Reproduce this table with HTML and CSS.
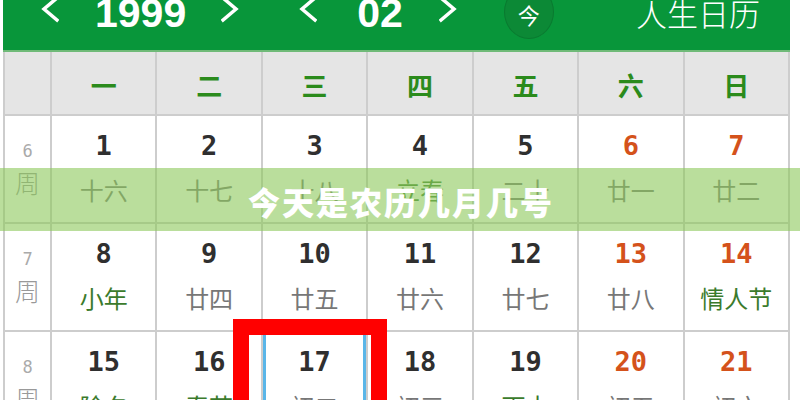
FILE: index.html
```html
<!DOCTYPE html>
<html lang="zh">
<head>
<meta charset="utf-8">
<title>人生日历</title>
<link rel="stylesheet" href="styles.css">
</head>
<body>
<div class="cal">
  <header class="topbar">
    <span class="chev c1"><svg width="18" height="26" viewBox="0 0 18 26"><polyline points="16,1 3,12 16,23" /></svg></span>
    <span class="year">1999</span>
    <span class="chev c2"><svg width="18" height="26" viewBox="0 0 18 26"><polyline points="2,1 15,12 2,23" /></svg></span>
    <span class="chev c3"><svg width="18" height="26" viewBox="0 0 18 26"><polyline points="16,1 3,12 16,23" /></svg></span>
    <span class="month">02</span>
    <span class="chev c4"><svg width="18" height="26" viewBox="0 0 18 26"><polyline points="2,1 15,12 2,23" /></svg></span>
    <span class="today-btn">今</span>
    <span class="brand">人生日历</span>
  </header>
  <div class="grid">
    <div class="hd"></div>
    <div class="hd">一</div>
    <div class="hd">二</div>
    <div class="hd">三</div>
    <div class="hd">四</div>
    <div class="hd">五</div>
    <div class="hd">六</div>
    <div class="hd">日</div>

    <div class="wk"><span class="wn">6</span><span class="wz">周</span></div>
    <div class="day"><span class="num">1</span><span class="lunar">十六</span></div>
    <div class="day"><span class="num">2</span><span class="lunar">十七</span></div>
    <div class="day"><span class="num">3</span><span class="lunar">十八</span></div>
    <div class="day"><span class="num">4</span><span class="lunar fest">立春</span></div>
    <div class="day"><span class="num">5</span><span class="lunar">二十</span></div>
    <div class="day"><span class="num we">6</span><span class="lunar">廿一</span></div>
    <div class="day"><span class="num we">7</span><span class="lunar">廿二</span></div>

    <div class="wk"><span class="wn">7</span><span class="wz">周</span></div>
    <div class="day"><span class="num">8</span><span class="lunar fest">小年</span></div>
    <div class="day"><span class="num">9</span><span class="lunar">廿四</span></div>
    <div class="day"><span class="num">10</span><span class="lunar">廿五</span></div>
    <div class="day"><span class="num">11</span><span class="lunar">廿六</span></div>
    <div class="day"><span class="num">12</span><span class="lunar">廿七</span></div>
    <div class="day"><span class="num we">13</span><span class="lunar">廿八</span></div>
    <div class="day"><span class="num we">14</span><span class="lunar fest">情人节</span></div>

    <div class="wk"><span class="wn">8</span><span class="wz">周</span></div>
    <div class="day"><span class="num">15</span><span class="lunar fest">除夕</span></div>
    <div class="day"><span class="num">16</span><span class="lunar fest">春节</span></div>
    <div class="day today"><span class="num">17</span><span class="lunar">初二</span></div>
    <div class="day"><span class="num">18</span><span class="lunar">初三</span></div>
    <div class="day"><span class="num">19</span><span class="lunar fest">雨水</span></div>
    <div class="day"><span class="num we">20</span><span class="lunar">初五</span></div>
    <div class="day"><span class="num we">21</span><span class="lunar">初六</span></div>
  </div>
</div>
<div class="banner"><span class="banner-title">今天是农历几月几号</span></div>
<div class="mark"></div>
</body>
</html>
```
FILE: styles.css
```css
html { overflow: hidden; }
body {
  margin: 0;
  background: #ffffff;
  font-family: "Noto Sans CJK SC", "Liberation Sans", sans-serif;
  position: relative;
  width: 800px;
  height: 400px;
  overflow: hidden;
}
.cal {
  margin-left: 3px;
  margin-top: -26px;
  width: 787px;
}
.topbar {
  height: 76px;
  background: #08963a;
  border-bottom: 2px solid #6fba78;
  display: flex;
  align-items: center;
  color: #ffffff;
}
.chev { display: flex; margin-top: -4px; }
.chev svg polyline {
  fill: none;
  stroke: #ffffff;
  stroke-width: 3.5;
  stroke-linecap: square;
  stroke-linejoin: miter;
}
.c1 { margin-left: 38px; }
.year {
  margin-left: 36px;
  font-family: "Liberation Sans", Arial, sans-serif;
  font-weight: 700;
  font-size: 41px;
  line-height: 1;
  margin-top: 2px;
}
.c2 { margin-left: 35px; }
.c3 { margin-left: 60px; }
.month {
  margin-left: 40px;
  font-family: "Liberation Sans", Arial, sans-serif;
  font-weight: 700;
  font-size: 41px;
  line-height: 1;
  margin-top: 2px;
}
.c4 { margin-left: 36px; }
.today-btn {
  margin-left: 47px;
  width: 48px;
  height: 48px;
  border-radius: 50%;
  background: #0c8936;
  border: 1px solid #0a7a30;
  display: flex;
  align-items: center;
  justify-content: center;
  font-size: 22px;
  line-height: 1;
  padding-top: 4px;
  box-sizing: content-box;
}
.brand {
  margin-left: auto;
  margin-right: 30px;
  font-size: 31px;
  font-weight: 300;
  line-height: 1;
}
.grid {
  display: grid;
  grid-template-columns: 45px repeat(7, 1fr);
  grid-template-rows: 62px repeat(3, 106px);
  gap: 2px;
  padding: 0 2px;
  background: #cdcdcd;
}
.hd {
  background: #e5e5e5;
  display: flex;
  align-items: center;
  justify-content: center;
  color: #2b8b1c;
  font-weight: 700;
  font-size: 26px;
  padding-top: 2px;
}
.wk {
  background: #ffffff;
  display: flex;
  flex-direction: column;
  align-items: center;
  padding-top: 24px;
}
.wn {
  font-family: "DejaVu Sans Mono", monospace;
  font-size: 17px;
  line-height: 22px;
  color: #aaaaaa;
}
.wz {
  font-size: 25px;
  line-height: 34px;
  margin-top: 3px;
  font-weight: 300;
  color: #999999;
}
.day {
  background: #ffffff;
  display: flex;
  flex-direction: column;
  align-items: center;
  padding-top: 15px;
}
.num {
  font-family: "DejaVu Sans Mono", monospace;
  font-weight: 700;
  font-size: 27px;
  line-height: 30px;
  color: #2f2f2f;
}
.num.we { color: #d4521b; }
.lunar {
  margin-top: 14px;
  font-size: 24px;
  line-height: 30px;
  color: #777777;
}
.lunar.fest { color: #3b7b2c; }
.today {
  box-shadow: inset 3px 0 0 #5ab6e8, inset -3px 0 0 #5ab6e8;
}
.banner {
  position: absolute;
  left: 0;
  top: 168px;
  width: 800px;
  height: 63px;
  background: rgba(140, 200, 90, 0.6);
  display: flex;
  align-items: center;
  justify-content: center;
}
.banner-title {
  color: #ffffff;
  font-size: 32px;
  font-weight: 900;
  letter-spacing: 2px;
  line-height: 1;
  padding-top: 2px;
  padding-left: 2px;
}
.mark {
  position: absolute;
  left: 233px;
  top: 319px;
  width: 154px;
  height: 130px;
  border: 16px solid #ff0000;
  box-sizing: border-box;
}
```
